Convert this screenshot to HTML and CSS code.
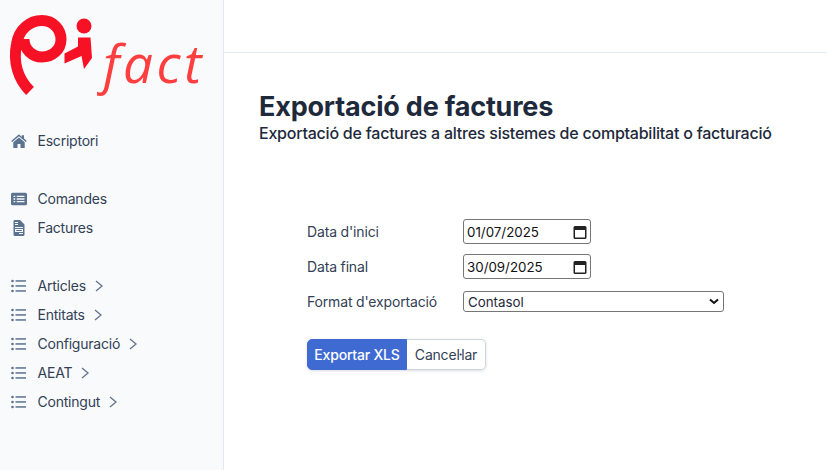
FILE: index.html
```html
<!DOCTYPE html>
<html lang="ca">
<head>
<meta charset="utf-8">
<title>Exportació de factures</title>
<link rel="stylesheet" href="styles.css">
</head>
<body>
<div class="app">
  <aside class="sidebar">
    <div class="logo">
      <svg class="logo-mark" viewBox="0 0 95 100" width="95" height="100" aria-hidden="true">
        <path d="M29 91C17 79 12 62 15.500 44C18 29 29 20.500 41 20.500C52 20.500 60 29 60 39.500C60 50 51 57 41 57C31 57 23 49 23 39" fill="none" stroke="#f61125" stroke-width="11"/>
        <circle cx="83" cy="26" r="7.500" fill="#f61125"/>
        <path d="M63.500 53.500L77 46.500V37.500H89.500L91 58L83 69L80.500 56L63.500 63.500Z" fill="#f61125"/>
      </svg>
      <span class="logo-text">fact</span>
    </div>
    <nav class="nav">
      <a class="nav-item"><svg class="ico" viewBox="0 0 16 16"><path d="M8 1.200L.2 8l1 1.100L8 3.300l6.800 5.800 1-1.100-2.800-2.400V2.200h-2.300v1.900z"/><path d="M2.300 9.200V15h4.200v-4h3v4h4.200V9.200L8 4.400z"/></svg>Escriptori</a>
      <div class="nav-gap"></div>
      <a class="nav-item"><svg class="ico" viewBox="0 0 16 16"><path fill-rule="evenodd" d="M1.500 1.800h13A1.500 1.500 0 0 1 16 3.300v9.400a1.500 1.500 0 0 1-1.500 1.500h-13A1.500 1.500 0 0 1 0 12.700V3.300a1.500 1.500 0 0 1 1.500-1.500zM2.500 4.700v1.400h1.700V4.700zm3.200 0v1.400h7.800V4.700zM2.500 7.300v1.400h1.700V7.300zm3.200 0v1.400h7.800V7.300zM2.500 9.900v1.400h1.700V9.900zm3.200 0v1.400h7.800V9.900z"/></svg>Comandes</a>
      <a class="nav-item"><svg class="ico" viewBox="0 0 16 16"><path fill-rule="evenodd" d="M3.500 0H9l4.500 4.500v10A1.500 1.500 0 0 1 12 16H4a1.500 1.500 0 0 1-1.500-1.500v-13A1.500 1.500 0 0 1 3.500 0zM4 2v1h3V2zm0 2v1h3V4zm0 3v1h8V7zm0 2v3h8V9zm1.200 1.100h5.600v.9H5.200zM8 13v1h4v-1z"/></svg>Factures</a>
      <div class="nav-gap"></div>
      <a class="nav-item"><svg class="ico" viewBox="0 0 16 16"><use href="#list"/></svg>Articles<svg class="chev" viewBox="0 0 10 14"><path d="M2 2l6 5-6 5"/></svg></a>
      <a class="nav-item"><svg class="ico" viewBox="0 0 16 16"><use href="#list"/></svg>Entitats<svg class="chev" viewBox="0 0 10 14"><path d="M2 2l6 5-6 5"/></svg></a>
      <a class="nav-item"><svg class="ico" viewBox="0 0 16 16"><use href="#list"/></svg>Configuració<svg class="chev" viewBox="0 0 10 14"><path d="M2 2l6 5-6 5"/></svg></a>
      <a class="nav-item"><svg class="ico" viewBox="0 0 16 16"><use href="#list"/></svg>AEAT<svg class="chev" viewBox="0 0 10 14"><path d="M2 2l6 5-6 5"/></svg></a>
      <a class="nav-item"><svg class="ico" viewBox="0 0 16 16"><use href="#list"/></svg>Contingut<svg class="chev" viewBox="0 0 10 14"><path d="M2 2l6 5-6 5"/></svg></a>
    </nav>
    <svg class="defs" width="0" height="0" aria-hidden="true"><defs><g id="list"><circle cx="1.500" cy="3" r="1.300"/><circle cx="1.500" cy="8" r="1.300"/><circle cx="1.500" cy="13" r="1.300"/><rect x="4.500" y="2.200" width="10.500" height="1.500"/><rect x="4.500" y="7.200" width="10.500" height="1.500"/><rect x="4.500" y="12.200" width="10.500" height="1.500"/></g></defs></svg>
  </aside>
  <div class="main">
    <header class="topbar"></header>
    <main class="content">
      <h1 class="title">Exportació de factures</h1>
      <p class="subtitle">Exportació de factures a altres sistemes de comptabilitat o facturació</p>
      <form class="form">
        <div class="row"><label class="label">Data d'inici</label>
          <div class="control date"><span>01/07/2025</span><svg class="cal" viewBox="0 0 14 14"><path d="M2 1h10a1.500 1.500 0 0 1 1.500 1.500v10A1.500 1.500 0 0 1 12 14H2a1.500 1.500 0 0 1-1.500-1.500v-10A1.500 1.500 0 0 1 2 1zm0 4v7.500h10V5z" fill-rule="evenodd"/></svg></div></div>
        <div class="row"><label class="label">Data final</label>
          <div class="control date"><span>30/09/2025</span><svg class="cal" viewBox="0 0 14 14"><path d="M2 1h10a1.500 1.500 0 0 1 1.500 1.500v10A1.500 1.500 0 0 1 12 14H2a1.500 1.500 0 0 1-1.500-1.500v-10A1.500 1.500 0 0 1 2 1zm0 4v7.500h10V5z" fill-rule="evenodd"/></svg></div></div>
        <div class="row"><label class="label">Format d'exportació</label>
          <div class="control select"><span>Contasol</span><svg class="caret" viewBox="0 0 10 7"><path d="M1 1.500l4 3.500 4-3.500"/></svg></div></div>
        <div class="buttons">
          <button type="button" class="btn primary">Exportar XLS</button><button type="button" class="btn secondary">Cancel·lar</button>
        </div>
      </form>
    </main>
  </div>
</div>
</body>
</html>
```
FILE: styles.css
```css
* { box-sizing: border-box; }
html, body { margin: 0; height: 100%; }
body { font-family: Inter, "Liberation Sans", sans-serif; background: #fff; color: #1e293b; overflow: hidden; }
.app { display: flex; height: 470px; }
.sidebar { width: 224px; flex: none; background: #f8fafc; border-right: 1px solid #e2e8f0; }
.logo { height: 126px; display: flex; align-items: flex-start; padding-left: 1px; }
.logo-mark { flex: none; }
.logo-text { font-family: "Open Sans", sans-serif; font-style: italic; font-weight: 500; font-size: 53px; line-height: 1; color: #ff3f3f; letter-spacing: 3.500px; margin: 36px 0 0 7px; }
.nav { display: flex; flex-direction: column; }
.nav-item { display: flex; align-items: center; height: 29px; padding-left: 11px; font-size: 14px; letter-spacing: -.22px; color: #334155; }
.nav-gap { height: 29px; }
.ico { width: 16px; height: 16px; fill: #5b7390; margin-right: 10.500px; flex: none; }
.chev { width: 10px; height: 14px; margin-left: 8px; fill: none; stroke: #64748b; stroke-width: 1.300; }
.defs { position: absolute; }
.main { flex: 1; min-width: 0; display: flex; flex-direction: column; }
.topbar { height: 53px; border-bottom: 1px solid #e2e8f0; flex: none; }
.content { padding: 37px 0 0 35px; }
.title { margin: 0; font-size: 27px; line-height: 34px; font-weight: 700; letter-spacing: -.2px; color: #1e293b; }
.subtitle { margin: 0; font-size: 16px; line-height: 24px; font-weight: 500; letter-spacing: -.23px; color: #1e293b; height: 24px; margin-top: -3px; }
.form { margin-top: 69px; margin-left: 48px; }
.row { display: flex; align-items: center; height: 35px; }
.label { width: 157px; font-size: 14px; letter-spacing: -.16px; color: #334155; }
.control { display: flex; align-items: center; justify-content: space-between; background: #fff; border: 1px solid #767676; font-size: 13.330px; color: #111; margin-left: -1px; }
.date { width: 128px; height: 25px; border-radius: 3px; padding: 0 3px 0 3px; }
.select { width: 261px; height: 21px; border-radius: 3px; padding: 0 4px 0 4px; color: #1e293b; }
.cal { width: 14px; height: 14px; fill: #222; }
.caret { width: 10px; height: 7px; fill: none; stroke: #111; stroke-width: 2; }
.buttons { display: inline-flex; margin-top: 20px; border-radius: 5px; box-shadow: 0 1px 3px rgba(15,23,42,.15); }
.btn { height: 31px; font: 500 14px Inter, "Liberation Sans", sans-serif; letter-spacing: -.2px; padding: 0; margin: 0; border: 1px solid #cbd5e1; }
.primary { width: 100px; background: #3f6ad2; color: #fff; border-color: #3f6ad2; border-radius: 5px 0 0 5px; }
.secondary { width: 79px; background: #fff; color: #334155; font-weight: 400; border-left: 0; border-radius: 0 5px 5px 0; }
```
